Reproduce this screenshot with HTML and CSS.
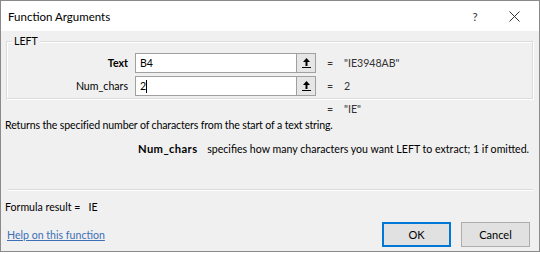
FILE: index.html
```html
<!DOCTYPE html>
<html lang="en">
<head>
    <meta charset="UTF-8">
    <title>Function Arguments</title>
    <link rel="stylesheet" href="styles.css">
</head>
<body>
    <div class="dialog">
        <div class="titlebar">
            <span class="title">Function Arguments</span>
            <span class="help-btn">?</span>
            <span class="close-btn">
                <svg width="11" height="11" viewBox="0 0 11 11"><path d="M0.5 0.5 L10.5 10.5 M10.5 0.5 L0.5 10.5" stroke="#333" stroke-width="1" fill="none"/></svg>
            </span>
        </div>

        <div class="content">
            <div class="group">
                <div class="group-title">LEFT</div>
                <div class="args">
                    <div class="arg-label bold">Text</div>
                    <div class="field">
                        <div class="field-input">B4</div>
                        <div class="ref-btn">
                            <svg width="11" height="12" viewBox="0 0 11 12"><path d="M5.5 1 L2 5 L4.5 5 L4.5 9 L6.5 9 L6.5 5 L9 5 Z" fill="#000"/><rect x="1" y="10" width="9" height="1" fill="#000"/></svg>
                        </div>
                    </div>
                    <div class="eq">=</div>
                    <div class="val">"IE3948AB"</div>

                    <div class="arg-label">Num_chars</div>
                    <div class="field">
                        <div class="field-input">2<span class="caret"></span></div>
                        <div class="ref-btn">
                            <svg width="11" height="12" viewBox="0 0 11 12"><path d="M5.5 1 L2 5 L4.5 5 L4.5 9 L6.5 9 L6.5 5 L9 5 Z" fill="#000"/><rect x="1" y="10" width="9" height="1" fill="#000"/></svg>
                        </div>
                    </div>
                    <div class="eq">=</div>
                    <div class="val">2</div>
                </div>
            </div>

            <div class="result-line">
                <span class="eq">=</span>
                <span class="val">"IE"</span>
            </div>
            <div class="desc">Returns the specified number of characters from the start of a text string.</div>
            <div class="arg-desc"><b class="arg-name">Num_chars</b> specifies how many characters you want LEFT to extract; 1 if omitted.</div>

            <div class="separator"></div>

            <div class="formula">Formula result =&nbsp;&nbsp; IE</div>

            <div class="footer">
                <a class="help-link" href="#">Help on this function</a>
                <div class="buttons">
                    <button class="btn btn-default">OK</button>
                    <button class="btn">Cancel</button>
                </div>
            </div>
        </div>
    </div>
</body>
</html>
```

FILE: styles.css
```css
html, body {
    margin: 0;
    padding: 0;
}
body {
    font-family: "Segoe UI", Lato, sans-serif;
    font-size: 10.6px;
    color: #000;
    background: #fff;
}
.dialog {
    width: 540px;
    height: 252px;
    box-sizing: border-box;
    border: 1px solid #8a8a8a;
    background: #f0f0f0;
    display: flex;
    flex-direction: column;
}
.titlebar {
    height: 30px;
    background: #fff;
    display: flex;
    align-items: center;
    padding-left: 7px;
    flex-shrink: 0;
    font-size: 11.5px;
}
.title {
    flex: 1;
}
.help-btn {
    width: 12px;
    text-align: center;
    margin-right: 28px;
    color: #333;
}
.close-btn {
    width: 11px;
    display: flex;
    margin-right: 19px;
}
.content {
    flex: 1;
    padding: 0 6px 0 4px;
    display: flex;
    flex-direction: column;
}
/* рамка группы аргументов */
.group {
    margin: 10px 0 0 1px;
    border: 1px solid #dcdcdc;
    box-shadow: inset 1px 1px 0 #fff, 1px 1px 0 #fff;
    height: 56px;
    position: relative;
}
.group-title {
    position: absolute;
    top: -8px;
    left: 5px;
    padding: 0 2px;
    background: #f0f0f0;
    line-height: 15px;
}
.args {
    display: grid;
    grid-template-columns: 121px 181px 14px 1fr;
    column-gap: 7px;
    row-gap: 3px;
    padding-top: 11px;
    align-items: center;
}
.arg-label {
    text-align: right;
}
.bold {
    font-weight: bold;
}
.field {
    display: flex;
    height: 20px;
}
.field-input {
    flex: 1;
    background: #fff;
    border: 1px solid #a0a0a0;
    border-right: none;
    padding-left: 4px;
    display: flex;
    align-items: center;
}
.caret {
    display: inline-block;
    width: 1px;
    height: 13px;
    background: #000;
}
.ref-btn {
    width: 18px;
    height: 18px;
    border: 1px solid #a0a0a0;
    background: #e6e6e6;
    display: flex;
    align-items: center;
    justify-content: center;
}
.eq {
    text-align: center;
    color: #333;
}
.val {
    color: #333;
}
.result-line {
    display: grid;
    grid-template-columns: 311px 14px 1fr;
    column-gap: 7px;
    margin-top: 2px;
    line-height: 16px;
}
.result-line .eq {
    grid-column: 2;
}
.desc {
    line-height: 16px;
    letter-spacing: -0.15px;
}
.arg-desc {
    margin-top: 8px;
    padding-left: 133px;
    line-height: 16px;
    white-space: nowrap;
}
.arg-name {
    font-size: 11.2px;
    letter-spacing: 0.4px;
    margin-right: 7px;
}
.separator {
    margin: 32px 0 0 3px;
    border-top: 1px solid #dcdcdc;
    border-bottom: 1px solid #fff;
}
.formula {
    margin-top: 8px;
    line-height: 16px;
}
.footer {
    display: flex;
    justify-content: space-between;
    align-items: center;
    margin-top: 7px;
}
.help-link {
    color: #3b6fb6;
    text-decoration: underline;
    margin-left: 2px;
}
.buttons {
    display: flex;
    gap: 10px;
    padding-right: 3px;
}
.btn {
    font-family: inherit;
    font-size: 11px;
    width: 69px;
    height: 25px;
    background: #e1e1e1;
    border: 1px solid #adadad;
    padding: 0;
    color: #000;
}
.btn-default {
    border: 2px solid #0078d7;
    background: #e1e1e1;
}
```
